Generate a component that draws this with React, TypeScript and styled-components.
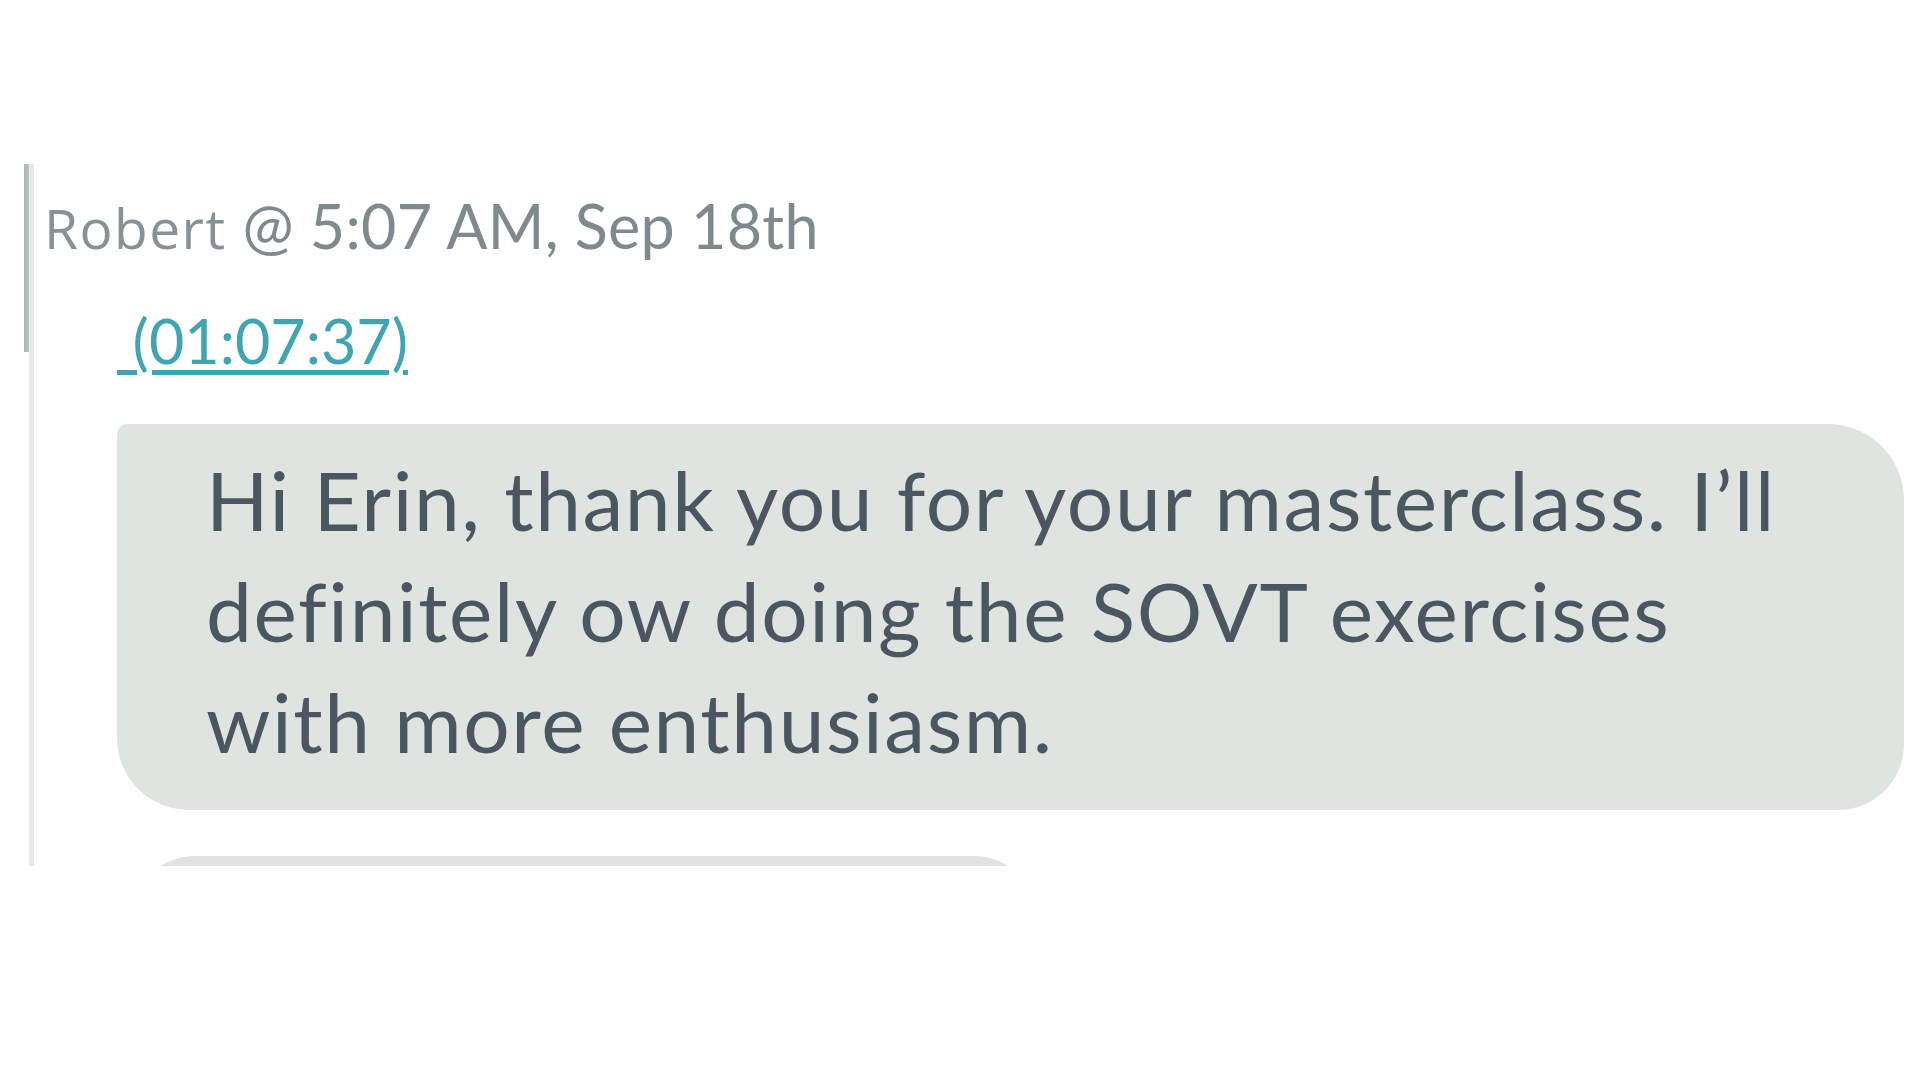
import React from "react";
import styled, { createGlobalStyle } from "styled-components";

const GlobalStyle = createGlobalStyle`
  html, body {
    margin: 0;
    padding: 0;
    background: #ffffff;
  }
  body {
    font-family: Lato, "Liberation Sans", sans-serif;
  }
`;

const Page = styled.div`
  width: 1920px;
  height: 1080px;
  padding-top: 164px;
  box-sizing: border-box;
`;

const Pane = styled.div`
  position: relative;
  margin-left: 24px;
`;

// scrollbar thumb sitting over the left rail
const ScrollThumb = styled.div`
  position: absolute;
  left: 0;
  top: 0;
  width: 5px;
  height: 188px;
  background: linear-gradient(90deg, #b0b3b3 0%, #c2c5c5 100%);
`;

// the conversation column, cut off at the bottom like a scrolled pane
const Thread = styled.div`
  margin-left: 5px;
  height: 702px;
  overflow: hidden;
  border-left: 5px solid #e4e9e9;
  padding-left: 10px;
  box-sizing: border-box;
`;

const Header = styled.div`
  padding-top: 27px;
  font-family: Lato, "Liberation Sans", sans-serif;
  font-size: 61px;
  line-height: 70px;
  letter-spacing: 0.3px;
  color: #80898c;
  white-space: nowrap;
`;

const Author = styled.span`
  font-family: "Open Sans", "Liberation Sans", sans-serif;
  font-size: 55px;
  letter-spacing: 1.5px;
  color: #899194;
`;

const Stamp = styled.div`
  margin-top: 43px;
  margin-left: 73px;
  font-size: 61px;
  line-height: 70px;
`;

const StampLink = styled.a`
  color: #3fa5b2;
  text-decoration: underline;
  text-decoration-thickness: 5px;
  text-underline-offset: 6px;
  white-space: pre;
`;

const Bubble = styled.div<{ $width?: number; $left?: number }>`
  margin-left: ${(p) => (p.$left ? `${p.$left}px` : "73px")};
  width: ${(p) => (p.$width ? `${p.$width}px` : "1787px")};
  background: #e0e4e1;
  border-radius: 10px 76px 66px 72px;
  box-sizing: border-box;
`;

const MessageBubble = styled(Bubble)`
  margin-top: 48px;
  padding: 20px 80px 33px 89px;
  font-size: 82px;
  line-height: 111px;
  letter-spacing: 1.6px;
  color: #4b5661;
`;

const NextBubble = styled(Bubble)`
  margin-top: 46px;
  height: 120px;
  border-radius: 76px 76px 66px 70px;
`;

export default function App() {
  return (
    <>
      <GlobalStyle />
      <Page>
        <Pane>
          <ScrollThumb />
          <Thread>
            <Header>
              <Author>Robert</Author> @ 5:07 AM, Sep 18th
            </Header>
            <Stamp>
              <StampLink href="#">{" (01:07:37)"}</StampLink>
            </Stamp>
            <MessageBubble>
              Hi Erin, thank you for your masterclass. I’ll
              <br />
              definitely ow doing the SOVT exercises
              <br />
              with more enthusiasm.
            </MessageBubble>
            <NextBubble $left={88} $width={905} />
          </Thread>
        </Pane>
      </Page>
    </>
  );
}
